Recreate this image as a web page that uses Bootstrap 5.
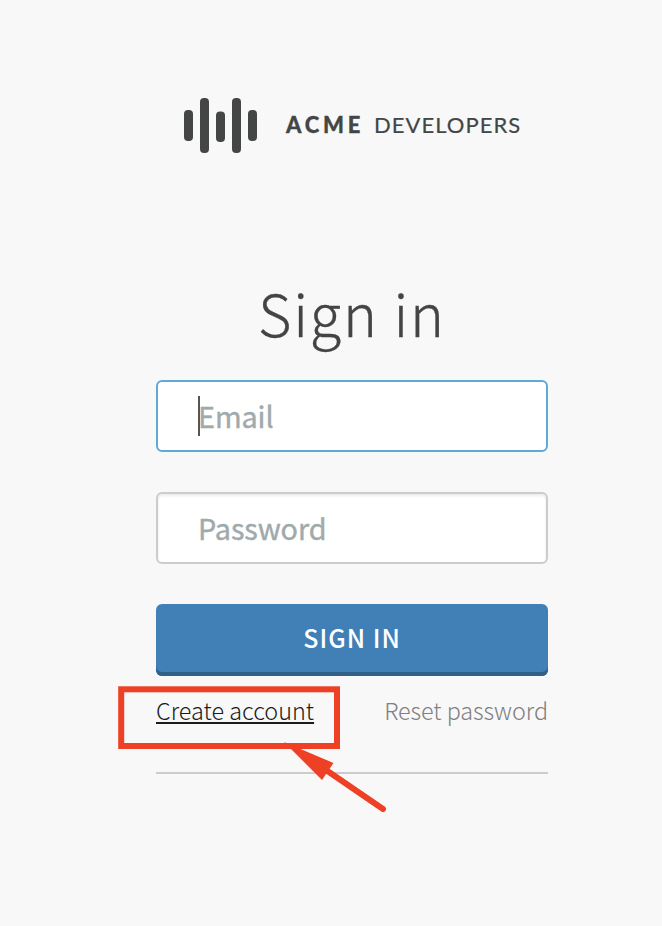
<!DOCTYPE html>
<html lang="en">
<head>
<meta charset="utf-8">
<meta name="viewport" content="width=device-width, initial-scale=1">
<title>Sign in</title>
<link rel="stylesheet" href="https://cdn.jsdelivr.net/npm/bootstrap@5.3.0/dist/css/bootstrap.min.css">
<style>
body { background: #f8f8f8; color: #444; font-family: "Noto Sans CJK SC", "Noto Sans", sans-serif; min-height: 926px; overflow: hidden; }
.panel { width: 392px; margin-left: 156px; padding-top: 97px; }
.brand { height: 57px; margin-left: 27px; color: #444645; font-family: Lato, sans-serif; font-size: 22px; line-height: 56px; white-space: nowrap; }
.brand-mark { width: 76px; height: 57px; flex: none; }
.brand-a { margin-left: 27px; width: 88px; font-weight: 900; letter-spacing: 3.8px; -webkit-text-stroke: .3px #444645; }
.brand-b { letter-spacing: 1.05px; -webkit-text-stroke: .2px #444645; }
.title { margin: 118px 0 0; height: 108px; line-height: 81px; font-size: 57.6px; font-weight: 300; letter-spacing: 1.8px; text-align: center; -webkit-text-stroke: .3px #444; }
.field { height: 72px; margin-bottom: 40px; }
.field .form-control { height: 72px; padding: 0 40px 2px; border: 2px solid #ccc; border-radius: 6px; background: #fff; font-size: 28.8px; letter-spacing: -.08px; line-height: 40px; box-shadow: inset 0 2px 3px rgba(0,0,0,.08); }
.field .form-control::placeholder { color: #a0aaac; opacity: 1; font-weight: 400; -webkit-text-stroke: .4px #a0aaac; }
.field .form-control.active { border-color: #62a8d5; box-shadow: none; }
.caret { left: 42px; top: 16px; width: 2px; height: 40px; background: #555; }
.btn-sign { height: 72px; background: #4080b7; border: 0; border-radius: 6px; box-shadow: inset 0 -4px 0 #305f87; color: #fff; font-size: 25px; font-weight: 500; letter-spacing: 1px; line-height: 66px; padding: 0 0 6px; }
.btn-sign:hover { background: #4080b7; color: #fff; }
.links { height: 98px; padding-top: 17px; border-bottom: 2px solid #ccc; font-size: 23.4px; font-weight: 300; line-height: 34px; white-space: nowrap; }
.link-create { color: #1c1c1c; text-decoration-thickness: 2px; text-underline-offset: 2px; text-decoration-skip-ink: none; }
.link-reset { color: #808080; letter-spacing: -.06px; }
.note { left: 0; top: 0; width: 662px; height: 926px; pointer-events: none; }
</style>
<script src="https://cdn.jsdelivr.net/npm/bootstrap@5.3.0/dist/js/bootstrap.bundle.min.js"></script>
</head>
<body class="position-relative">
<main class="panel">
  <div class="brand d-flex">
    <svg class="brand-mark" viewBox="0 0 76 57" fill="#444645" aria-hidden="true">
      <rect x="1" y="13" width="9" height="31" rx="4"/>
      <rect x="17" y="1" width="9" height="55" rx="4"/>
      <rect x="33" y="14.500" width="9" height="30.500" rx="4"/>
      <rect x="49" y="1" width="9" height="55" rx="4"/>
      <rect x="65" y="13" width="9" height="31" rx="4"/>
    </svg>
    <span class="brand-a">ACME</span><span class="brand-b">DEVELOPERS</span>
  </div>
  <h1 class="title">Sign in</h1>
  <form onsubmit="return false">
    <div class="field position-relative">
      <input class="form-control active" type="email" placeholder="Email" aria-label="Email">
      <span class="caret position-absolute"></span>
    </div>
    <div class="field">
      <input class="form-control" type="password" placeholder="Password" aria-label="Password">
    </div>
    <button class="btn btn-sign d-block w-100" type="submit">SIGN IN</button>
  </form>
  <div class="links d-flex justify-content-between">
    <a class="link-create" href="#">Create account</a>
    <a class="link-reset text-decoration-none" href="#">Reset password</a>
  </div>
</main>
<svg class="note position-absolute" viewBox="0 0 662 926" aria-hidden="true">
  <rect x="121.200" y="689.300" width="215.800" height="56.700" fill="none" stroke="#ed4025" stroke-width="6"/>
  <path d="M326 770L383 809" stroke="#ed4025" stroke-width="6" stroke-linecap="round"/>
  <path d="M284 742L333.500 763L322 780Z" fill="#ed4025"/>
</svg>
</body>
</html>
